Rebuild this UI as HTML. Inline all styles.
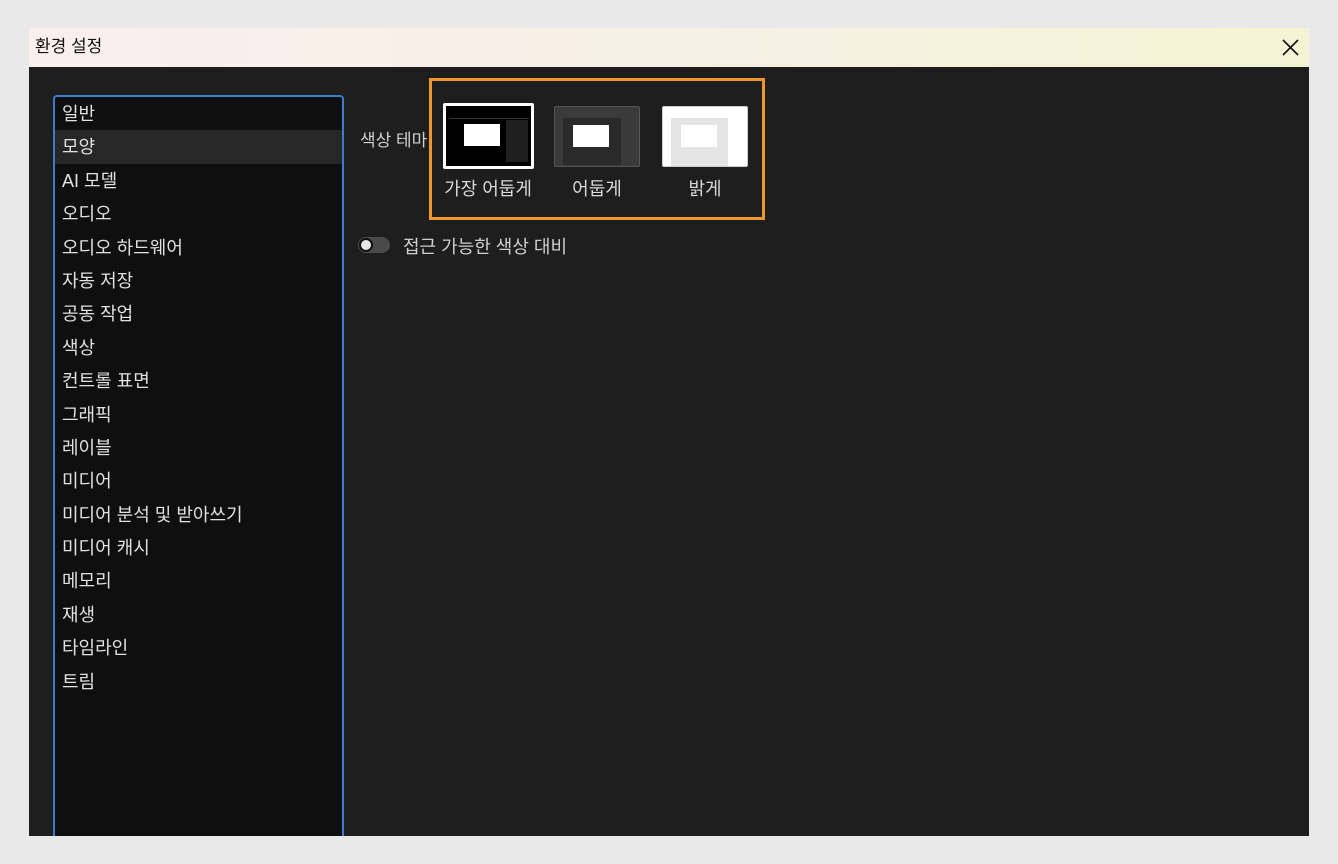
<!DOCTYPE html><html><head><meta charset="utf-8"><style>
*{margin:0;padding:0;box-sizing:border-box}
body{width:1338px;height:864px;background:#e9e9e9;position:relative;overflow:hidden;font-family:"Liberation Sans","Noto Sans CJK KR",sans-serif}
.dlg{position:absolute;left:29px;top:28px;width:1280px;height:808px;background:#1e1e1e;overflow:hidden}
.tb{position:absolute;left:0;top:0;width:1280px;height:39px;background:linear-gradient(90deg,#f9efec,#f7f0e6 50%,#f3f4d4);color:#111;font-size:17px;line-height:37px;padding-left:6px}
.x{position:absolute;right:10px;top:11px}
.side{position:absolute;left:24px;top:67px;width:291px;height:760px;background:#0f0f0f;border:2px solid #3d7ccc;border-radius:4px}
.it{height:33.4px;line-height:34px;color:#e0e0e0;font-size:18px;padding-left:7px}
.sel{background:#272727}
.lab{position:absolute;color:#cfcfcf;font-size:17px}
.ob{position:absolute;left:400px;top:50px;width:336px;height:142px;border:3px solid #f0962a}
.th{position:absolute;border-radius:2px}
.tl{position:absolute;top:94px;color:#d8d8d8;font-size:18px;width:100px;text-align:center}
</style></head><body>
<div class="dlg">
<div class="tb">환경 설정<svg class="x" width="17" height="17" viewBox="0 0 17 17"><path d="M1 1L16 16M16 1L1 16" stroke="#111" stroke-width="1.6"/></svg></div>
<div class="side">
<div class="it">일반</div><div class="it sel">모양</div><div class="it">AI 모델</div><div class="it">오디오</div><div class="it">오디오 하드웨어</div><div class="it">자동 저장</div><div class="it">공동 작업</div><div class="it">색상</div><div class="it">컨트롤 표면</div><div class="it">그래픽</div><div class="it">레이블</div><div class="it">미디어</div><div class="it">미디어 분석 및 받아쓰기</div><div class="it">미디어 캐시</div><div class="it">메모리</div><div class="it">재생</div><div class="it">타임라인</div><div class="it">트림</div>
</div>
<div class="lab" style="left:331px;top:98px">색상 테마</div>
<div class="ob" style="background:#1e1e1e">
 <div class="th" style="left:11px;top:22px;width:91px;height:66px;border:3px solid #fff;background:#000">
  <div style="position:absolute;left:3px;top:12px;width:80px;height:1px;background:#333"></div>
  <div style="position:absolute;left:60px;top:14px;width:22px;height:42px;background:#1e1e1e"></div>
  <div style="position:absolute;left:18px;top:18px;width:36px;height:22px;background:#fff"></div>
 </div>
 <div class="th" style="left:122px;top:25px;width:86px;height:61px;background:#3a3a3a;border:1px solid #555">
  <div style="position:absolute;left:8px;top:11px;width:58px;height:47px;background:#2a2a2a"></div>
  <div style="position:absolute;left:18px;top:18px;width:36px;height:22px;background:#fff"></div>
 </div>
 <div class="th" style="left:230px;top:25px;width:86px;height:61px;background:#fff;border:1px solid #ccc">
  <div style="position:absolute;left:8px;top:11px;width:57px;height:48px;background:#e4e4e4"></div>
  <div style="position:absolute;left:18px;top:18px;width:36px;height:22px;background:#fff"></div>
 </div>
 <div class="tl" style="left:6px">가장 어둡게</div>
 <div class="tl" style="left:115px">어둡게</div>
 <div class="tl" style="left:223px">밝게</div>
</div>
<div style="position:absolute;left:329px;top:209px;width:32px;height:16px;border-radius:8px;background:#4a4a4a"><div style="position:absolute;left:1px;top:1px;width:14px;height:14px;border-radius:50%;background:#e8e8e8;border:2px solid #111"></div></div>
<div class="lab" style="left:374px;top:205px;font-size:18px">접근 가능한 색상 대비</div>
</div>
</body></html>
